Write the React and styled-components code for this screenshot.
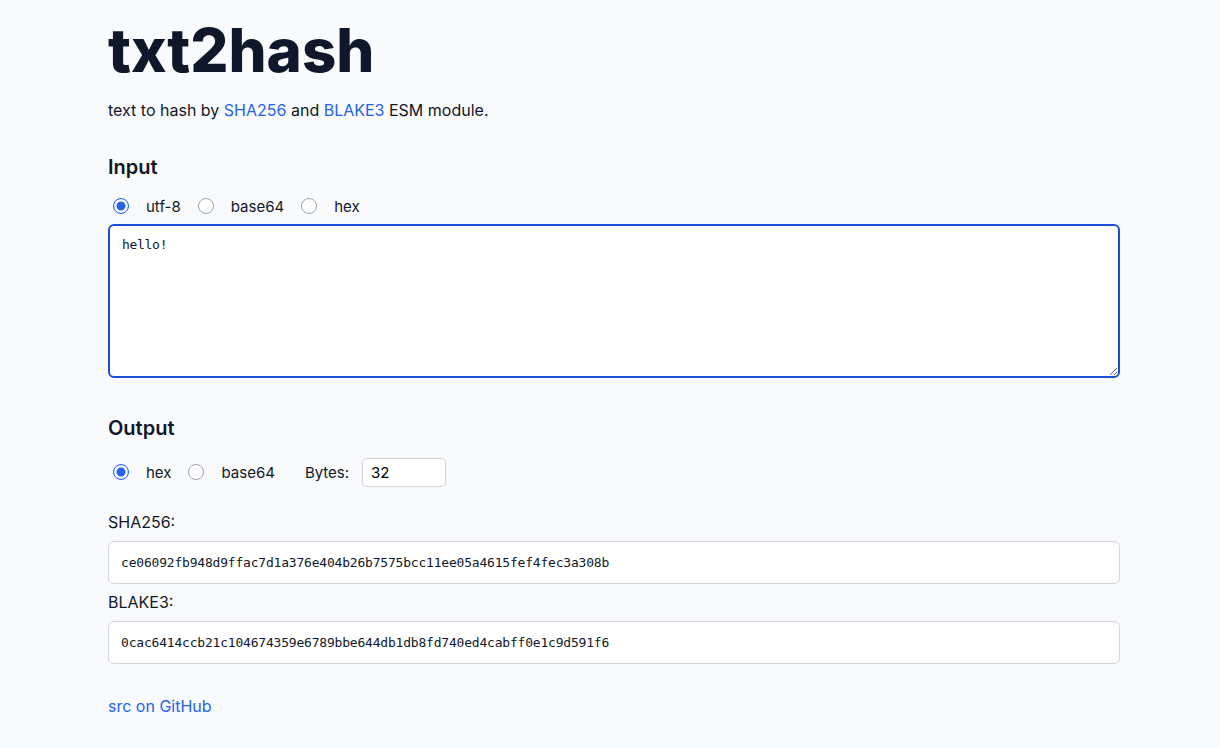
import React, { useState } from "react";
import styled, { createGlobalStyle } from "styled-components";

const GlobalStyle = createGlobalStyle`
  body {
    margin: 0;
    background: #f8fafc;
    color: #111827;
    font-family: Inter, "Noto Sans", sans-serif;
  }
`;

const Page = styled.main`
  width: 1012px;
  margin: 0 0 0 108px;
  padding-top: 14px;
`;

const Title = styled.h1`
  margin: 0;
  font-size: 60px;
  font-weight: 800;
  letter-spacing: 0;
  color: #0f172a;
  line-height: 72px;
`;

const Lead = styled.p`
  margin: 12px 0 0;
  font-size: 16px;
  line-height: 24px;
`;

const Link = styled.a`
  color: #2563eb;
  text-decoration: none;
`;

const Heading = styled.h2`
  margin: ${(p) => p.top}px 0 0;
  font-size: 20px;
  font-weight: 600;
  line-height: 28px;
`;

const RadioRow = styled.div`
  display: flex;
  align-items: center;
  margin-top: ${(p) => p.top}px;
  height: 30px;
  font-size: 15px;
`;

const Option = styled.label`
  display: flex;
  align-items: center;
  margin-right: 12px;
  cursor: pointer;
`;

const Radio = styled.input.attrs({ type: "radio" })`
  appearance: none;
  width: 16px;
  height: 16px;
  margin: 0 17px 0 5px;
  border-radius: 50%;
  border: 1.5px solid ${(p) => (p.checked ? "#2563eb" : "#9ca3af")};
  background: #fff;
  box-shadow: ${(p) => (p.checked ? "inset 0 0 0 2.5px #fff, inset 0 0 0 8px #2563eb" : "none")};
`;

const TextArea = styled.textarea`
  display: block;
  box-sizing: border-box;
  width: 100%;
  height: 154px;
  margin-top: 3px;
  padding: 11px 12px;
  border: 2px solid #1d4ed8;
  border-radius: 6px;
  font-family: "DejaVu Sans Mono", monospace;
  font-size: 13px;
  letter-spacing: -0.3px;
  color: #111827;
  background: #fff;
  outline: none;
`;

const BytesLabel = styled.span`
  margin-left: 18px;
  margin-right: 13px;
  font-size: 15px;
`;

const BytesInput = styled.input`
  box-sizing: border-box;
  width: 84px;
  height: 29px;
  padding: 0 8px;
  border: 1px solid #d1d5db;
  border-radius: 5px;
  font-family: Inter, sans-serif;
  font-size: 15px;
  background: #fff;
`;

const FieldLabel = styled.div`
  margin-top: ${(p) => p.top}px;
  font-size: 16px;
  line-height: 22px;
`;

const HashBox = styled.div`
  box-sizing: border-box;
  height: 43px;
  margin-top: 8px;
  padding: 0 12px;
  display: flex;
  align-items: center;
  border: 1px solid #d1d5db;
  border-radius: 6px;
  background: #fff;
  font-family: "DejaVu Sans Mono", monospace;
  font-size: 13px;
  letter-spacing: -0.2px;
`;

const Footer = styled.div`
  margin-top: 32px;
  font-size: 16px;
`;

export default function App() {
  const [enc, setEnc] = useState("utf-8");
  const [out, setOut] = useState("hex");
  return (
    <Page>
      <GlobalStyle />
      <Title>txt2hash</Title>
      <Lead>
        text to hash by <Link href="#">SHA256</Link> and <Link href="#">BLAKE3</Link> ESM module.
      </Lead>
      <Heading top={31}>Input</Heading>
      <RadioRow top={10}>
        {["utf-8", "base64", "hex"].map((v) => (
          <Option key={v}>
            <Radio checked={enc === v} onChange={() => setEnc(v)} />
            {v}
          </Option>
        ))}
      </RadioRow>
      <TextArea defaultValue="hello!" />
      <Heading top={36}>Output</Heading>
      <RadioRow top={15}>
        {["hex", "base64"].map((v) => (
          <Option key={v}>
            <Radio checked={out === v} onChange={() => setOut(v)} />
            {v}
          </Option>
        ))}
        <BytesLabel>Bytes:</BytesLabel>
        <BytesInput defaultValue="32" />
      </RadioRow>
      <FieldLabel top={24}>SHA256:</FieldLabel>
      <HashBox>ce06092fb948d9ffac7d1a376e404b26b7575bcc11ee05a4615fef4fec3a308b</HashBox>
      <FieldLabel top={7}>BLAKE3:</FieldLabel>
      <HashBox>0cac6414ccb21c104674359e6789bbe644db1db8fd740ed4cabff0e1c9d591f6</HashBox>
      <Footer>
        <Link href="#">src on GitHub</Link>
      </Footer>
    </Page>
  );
}
